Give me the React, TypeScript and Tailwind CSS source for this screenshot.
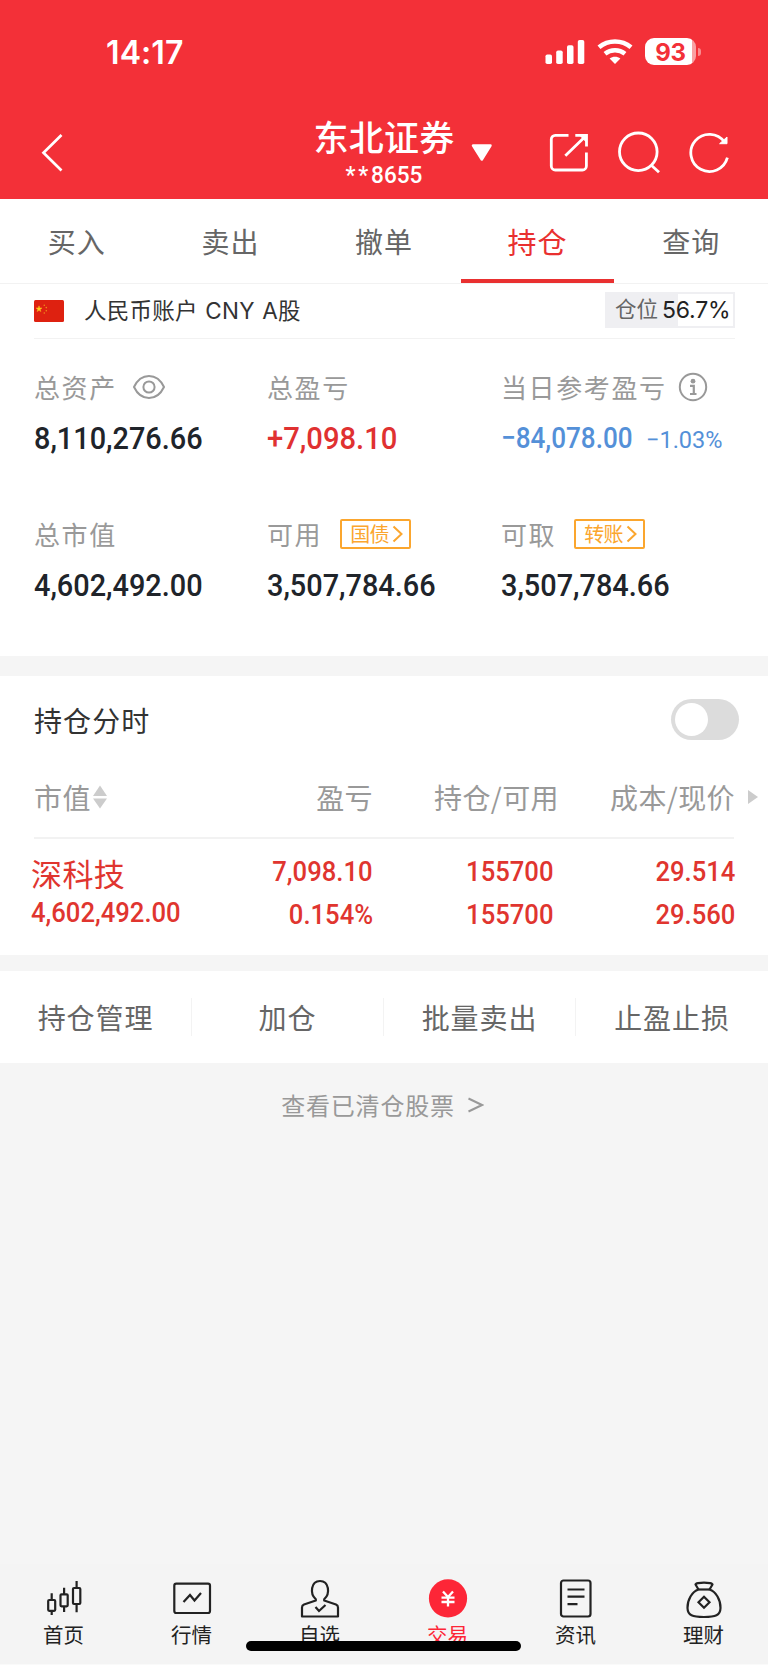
import React from "react";

const tabs = ["买入", "卖出", "撤单", "持仓", "查询"];
const actions = ["持仓管理", "加仓", "批量卖出", "止盈止损"];

const Digits = ({
	children,
	className = "",
}: {
	children: React.ReactNode;
	className?: string;
}) => (
	<span
		className={`inline-block whitespace-nowrap font-['Roboto',sans-serif] ${className}`}
	>
		{children}
	</span>
);

const StatusBar = () => (
	<div className="flex h-[103px] items-center justify-between pl-[106px] pr-[67px]">
		<span className="pt-[3px] font-['Inter',sans-serif] text-[32px] font-semibold leading-none tracking-[0.1px]">
			14:17
		</span>
		<div className="flex items-center">
			<svg width="40" height="26" viewBox="0 0 40 26" fill="#fff">
				<rect x="0.5" y="15.5" width="6.5" height="9.5" rx="1.8" />
				<rect x="11.2" y="11.5" width="6.5" height="13.5" rx="1.8" />
				<rect x="22" y="6.3" width="6.5" height="18.7" rx="1.8" />
				<rect x="32.8" y="1" width="6.5" height="24" rx="1.8" />
			</svg>
			<svg
				className="ml-[12px]"
				width="36"
				height="26"
				viewBox="0 0 36 26"
				fill="none"
				stroke="#fff"
			>
				<path d="M2 8.3C11.2 0.6 24.8 0.6 34 8.3" strokeWidth="4.6" />
				<path d="M8 14.8C13.8 10 22.2 10 28 14.8" strokeWidth="4.4" />
				<path
					d="M12.6 19.6C15.8 17.1 20.2 17.1 23.4 19.6L18 25Z"
					fill="#fff"
					stroke="none"
				/>
			</svg>
			<div className="ml-[12px] flex items-center">
				<div className="flex h-[27px] w-[51px] items-center justify-center rounded-[9px] bg-[linear-gradient(90deg,#fff_47px,#f9a0a3_47px)] pt-[2px] font-['Inter',sans-serif] text-[24px] font-bold leading-none tracking-[-0.3px] text-[#f33038]">
					93
				</div>
				<div className="ml-[2px] h-[8px] w-[3px] rounded-r-full bg-[#f98b8f]" />
			</div>
		</div>
	</div>
);

const TitleBar = () => (
	<div className="flex h-[96px]">
		<svg className="ml-[40px] mt-[29px]" width="26" height="42" viewBox="0 0 26 42">
			<path d="M21.5 3L3.5 20.7L21.5 38.5" fill="none" stroke="#fff" strokeWidth="2.7" />
		</svg>
		<div className="ml-[247px] flex w-[142px] flex-col items-center">
			<div className="mt-[15px] whitespace-nowrap text-[35px] font-medium leading-[36px] tracking-[0.3px]">
				东北证券
			</div>
			<Digits className="mt-[7px] scale-x-[0.94] text-[24px] font-medium leading-[28px]">
				<span className="tracking-[3px]">**</span>8655
			</Digits>
		</div>
		<svg className="ml-[15px] mt-[40px]" width="24" height="20" viewBox="0 0 24 20">
			<path
				d="M3 2.5H20.5L11.8 16.5Z"
				fill="#fff"
				stroke="#fff"
				strokeWidth="2.5"
				strokeLinejoin="round"
			/>
		</svg>
		<div className="ml-[53px] mt-[27px] flex gap-[27px]">
			<svg width="44" height="46" viewBox="0 0 44 46" fill="none" stroke="#fff" strokeWidth="2.8">
				<path d="M21.5 5.3H8.3A4 4 0 0 0 4.3 9.3V36A4 4 0 0 0 8.3 40H35.4A4 4 0 0 0 39.4 36V22.5" />
				<path d="M28.3 5.3H39.5V16.5M39.3 5.5L18.3 25.8" />
				<path d="M33 5.5H39.3V12Z" fill="#fff" strokeWidth="1" />
			</svg>
			<svg width="44" height="46" viewBox="0 0 44 46" fill="none" stroke="#fff" strokeWidth="2.8">
				<circle cx="20.3" cy="21.8" r="18.8" />
				<path d="M33.3 35.2L41 42.3" />
			</svg>
			<svg width="44" height="46" viewBox="0 0 44 46" fill="none" stroke="#fff" strokeWidth="2.8">
				<path d="M35.5 12A18.6 18.6 0 1 0 38.4 27.7" />
				<path d="M30.6 13.7H38V7Z" fill="#fff" strokeWidth="1" />
			</svg>
		</div>
	</div>
);

const ChinaFlag = () => (
	<svg width="30" height="22" viewBox="0 0 30 22">
		<rect width="30" height="22" rx="1.5" fill="#de2110" />
		<path
			d="M5 5.8L5.8 8H8L6.2 9.4L6.9 11.6L5 10.3L3.1 11.6L3.8 9.4L2 8H4.2Z"
			fill="#fbd01c"
			stroke="#fbb01c"
			strokeWidth="0.5"
		/>
		<g fill="#ef8a1c">
			<circle cx="10.3" cy="5.2" r="0.8" />
			<circle cx="12.3" cy="7.6" r="0.8" />
			<circle cx="12.3" cy="10.7" r="0.8" />
			<circle cx="10.3" cy="13" r="0.8" />
		</g>
	</svg>
);

const TagButton = ({ text }: { text: string }) => (
	<button className="ml-[18px] flex h-[30px] w-[71px] items-center rounded-[2px] border-2 border-[#fba62e] pl-[8px] text-[20px] leading-none tracking-[-0.6px] text-[#fba62e]">
		{text}
		<svg className="ml-[3px]" width="11" height="18" viewBox="0 0 11 18" fill="none">
			<path d="M1.5 1.5L9.5 9L1.5 16.5" stroke="#fba62e" strokeWidth="2" />
		</svg>
	</button>
);

const Stat = ({
	label,
	extra,
	children,
}: {
	label: string;
	extra?: React.ReactNode;
	children: React.ReactNode;
}) => (
	<div className="h-[147px]">
		<div className="flex h-[32px] items-center whitespace-nowrap text-[26px] leading-none tracking-[1.6px] text-[#999]">
			{label}
			{extra}
		</div>
		<div className="mt-[19px] flex h-[32px] items-center whitespace-nowrap text-[32px] leading-none text-[#20242a]">
			{children}
		</div>
	</div>
);

const statDigits = "origin-left scale-x-[0.902] font-medium";

const Summary = () => (
	<div className="grid h-[317px] grid-cols-[233px_234px_1fr] pl-[34px] pt-[32px]">
		<Stat
			label="总资产"
			extra={
				<svg
					className="ml-[15px]"
					width="34"
					height="26"
					viewBox="0 0 34 26"
					fill="none"
					stroke="#999"
					strokeWidth="2"
				>
					<path d="M2 13C9 -1.7 25 -1.7 32 13C25 27.7 9 27.7 2 13Z" />
					<circle cx="17" cy="13" r="5.6" />
				</svg>
			}
		>
			<Digits className={statDigits}>8,110,276.66</Digits>
		</Stat>
		<Stat label="总盈亏">
			<Digits className="origin-left scale-x-[0.912] font-medium text-[#e03131]">
				+7,098.10
			</Digits>
		</Stat>
		<Stat
			label="当日参考盈亏"
			extra={
				<svg className="ml-[11px]" width="30" height="30" viewBox="0 0 30 30" fill="none" stroke="#999">
					<circle cx="15" cy="15" r="13.2" strokeWidth="2" />
					<circle cx="15" cy="9.2" r="2.4" fill="#999" stroke="none" />
					<path d="M12 13.8H15.8V22M12 22H18.5" strokeWidth="2.2" />
				</svg>
			}
		>
			<div className="flex w-[224px] items-baseline text-[#5490d8]">
				<Digits className="w-[145px] origin-left scale-x-[0.87] text-[30px] font-medium">
					−84,078.00
				</Digits>
				<Digits className="origin-left scale-x-[0.98] text-[24px] font-normal">
					−1.03%
				</Digits>
			</div>
		</Stat>
		<Stat label="总市值">
			<Digits className={statDigits}>4,602,492.00</Digits>
		</Stat>
		<Stat label="可用" extra={<TagButton text="国债" />}>
			<Digits className={statDigits}>3,507,784.66</Digits>
		</Stat>
		<Stat label="可取" extra={<TagButton text="转账" />}>
			<Digits className={statDigits}>3,507,784.66</Digits>
		</Stat>
	</div>
);

const Pair = ({ top, bottom, className }: { top: string; bottom: string; className: string }) => (
	<div className={`flex flex-col items-end ${className}`}>
		<Digits className="origin-right scale-x-[0.915] font-medium leading-[43px]">{top}</Digits>
		<Digits className="origin-right scale-x-[0.915] font-medium leading-[43px]">
			{bottom}
		</Digits>
	</div>
);

const Holdings = () => (
	<>
		<div className="flex h-[88px] items-center justify-between bg-white pl-[34px] pr-[29px]">
			<span className="text-[28px] leading-none tracking-[1.1px] text-[#333]">持仓分时</span>
			<div className="mb-[2px] flex h-[41px] w-[68px] items-center rounded-full bg-[#dcdcdc] pl-[4px]">
				<div className="h-[33px] w-[33px] rounded-full bg-white" />
			</div>
		</div>
		<div className="bg-white">
			<div className="flex h-[73px] items-center pb-[7px] text-[28px] leading-none tracking-[0.4px] text-[#999]">
				<div className="flex w-[180px] items-center pl-[34px]">
					市值
					<svg className="ml-[1px]" width="16" height="26" viewBox="0 0 16 26" fill="#ccc">
						<path d="M8 1.5L15 12H1Z" />
						<path d="M8 24.5L15 14.5H1Z" />
					</svg>
				</div>
				<div className="w-[193px] text-right">盈亏</div>
				<div className="w-[186px] text-right">持仓/可用</div>
				<div className="w-[176px] text-right">成本/现价</div>
				<svg className="ml-[12px]" width="12" height="16" viewBox="0 0 12 16" fill="#ccc">
					<path d="M1 1L11 8L1 15Z" />
				</svg>
			</div>
			<div className="mx-[34px] h-[2px] bg-[#f2f2f2]" />
			<div className="flex h-[116px] pt-[11px] text-[28px] text-[#e0352f]">
				<div className="flex w-[180px] flex-col items-start pl-[31px]">
					<div className="whitespace-nowrap text-[31px] leading-[46px] tracking-[0.4px]">
						深科技
					</div>
					<Digits className="origin-left scale-x-[0.915] font-medium leading-[34px]">
						4,602,492.00
					</Digits>
				</div>
				<Pair className="w-[193px]" top="7,098.10" bottom="0.154%" />
				<Pair className="w-[180px]" top="155700" bottom="155700" />
				<Pair className="w-[182px]" top="29.514" bottom="29.560" />
			</div>
		</div>
	</>
);

const navItems = [
	{
		label: "首页",
		icon: (
			<>
				<rect x="4.2" y="20" width="7" height="10.8" rx="1" />
				<path d="M7.7 13.3V20M7.7 30.8V35" />
				<rect x="16.5" y="14.3" width="7.2" height="12" rx="1" />
				<path d="M20.1 7.7V14.3M20.1 26.3V32" />
				<rect x="29" y="8" width="7.3" height="16" rx="1" />
				<path d="M32.6 1V8M32.6 24V32.3" />
			</>
		),
	},
	{
		label: "行情",
		icon: (
			<>
				<rect x="2.3" y="3.7" width="35.7" height="29.3" rx="2" />
				<path d="M11.5 22L18 15L22.5 20.5L29 13" />
			</>
		),
	},
	{
		label: "自选",
		icon: (
			<>
				<path
					d="M15.8 19.3C9.5 13.5 11 1 20 1S30.5 13.5 24.2 19.3V20.5L36 24.5C37.5 25.2 38 26 38 27.5V36.5H2V27.5C2 26 2.5 25.2 4 24.5L15.8 20.5Z"
					strokeLinejoin="round"
				/>
				<path d="M15.5 27L19 31L25.5 25" />
			</>
		),
	},
	{ label: "交易", icon: null },
	{
		label: "资讯",
		icon: (
			<>
				<rect x="5" y="0.5" width="29.5" height="36" rx="2.5" />
				<path d="M11.5 9.5H28.5M11.5 16.7H28.5M11.5 24.2H21.5" />
			</>
		),
	},
	{
		label: "理财",
		icon: (
			<>
				<path
					d="M14.5 9.5L11.5 4.5C11 2 29 2 28.5 4.5L25.5 9.5C32 11.5 36.7 20 36.5 28C36.3 35.5 31.5 37 20 37S3.7 35.5 3.5 28C3.3 20 8 11.5 14.5 9.5Z"
					strokeLinejoin="round"
				/>
				<path d="M14.5 9.5H25.5" />
				<path d="M20 16.8L25.5 22.3L20 27.8L14.5 22.3Z" />
			</>
		),
	},
];

const BottomNav = () => (
	<div className="relative h-[101px] border-b border-[#fafafa] bg-[#f4f4f4]">
		<div className="grid grid-cols-6 pt-[16px]">
			{navItems.map((item) => (
				<div key={item.label} className="flex flex-col items-center">
					{item.icon ? (
						<svg
							className="overflow-visible"
							width="40"
							height="40"
							viewBox="0 0 40 40"
							fill="none"
							stroke="#222"
							strokeWidth="2.2"
						>
							{item.icon}
						</svg>
					) : (
						<svg className="overflow-visible" width="40" height="40" viewBox="0 0 40 40">
							<circle cx="20" cy="18.4" r="19.1" fill="#fd2637" />
							<path
								d="M15 11.5L20 17L25 11.5M20 17V26.5M13.5 17.7H26.5M13.5 22H26.5"
								fill="none"
								stroke="#fff"
								strokeWidth="2.3"
							/>
						</svg>
					)}
					<span
						className={`mt-[2px] pr-[1px] text-[20.5px] leading-[24px] ${
							item.icon ? "text-[#222]" : "text-[#fd2637]"
						}`}
					>
						{item.label}
					</span>
				</div>
			))}
		</div>
		<div className="absolute left-[246px] top-[77px] h-[10px] w-[275px] rounded-full bg-black" />
	</div>
);

const App = () => {
	return (
		<div className="flex h-[1665px] w-[768px] flex-col overflow-hidden bg-[#f5f5f5] font-['Noto_Sans_CJK_SC',sans-serif]">
			<header className="h-[199px] bg-[#f33038] text-white">
				<StatusBar />
				<TitleBar />
			</header>
			<div className="bg-white">
				<div className="grid h-[85px] grid-cols-5 border-b border-[#f2f2f2] pt-px text-[28px] leading-none tracking-[1px] text-[#666]">
					{tabs.map((tab) => (
						<div
							key={tab}
							className={`flex items-center justify-center border-b-4 pt-[3px] ${
								tab === "持仓"
									? "border-[#e93030] text-[29px] text-[#e93030]"
									: "border-transparent"
							}`}
						>
							{tab}
						</div>
					))}
				</div>
				<div className="ml-[34px] mr-[33px] flex h-[55px] items-center border-b border-[#f2f2f2]">
					<ChinaFlag />
					<span className="ml-[20px] whitespace-nowrap pt-px font-['Inter','Noto_Sans_CJK_SC',sans-serif] text-[22.5px] leading-none tracking-[0.25px] text-[#333] [word-spacing:1px]">
						人民币账户 CNY A股
					</span>
					<div className="mb-[2px] ml-auto flex h-[36px] w-[130px] items-center whitespace-nowrap border-2 border-[#efeff2] bg-[linear-gradient(90deg,#efeff2_71px,#fff_71px)] pl-[8px] font-['Inter','Noto_Sans_CJK_SC',sans-serif] leading-none">
						<span className="text-[21.5px] text-[#666]">仓位</span>
						<span className="ml-[4px] text-[23px] tracking-[-0.2px] text-[#222]">56.7%</span>
					</div>
				</div>
				<Summary />
			</div>
			<div className="h-[20px] shrink-0" />
			<Holdings />
			<div className="h-[16px] shrink-0" />
			<div className="grid h-[92px] grid-cols-4 items-center bg-white text-[28px] leading-none tracking-[0.9px] text-[#666]">
				{actions.map((action) => (
					<div
						key={action}
						className="flex h-[38px] items-center justify-center border-r border-[#f3f3f3] last:border-r-0"
					>
						{action}
					</div>
				))}
			</div>
			<div className="flex h-[84px] items-center justify-center pr-[3px] text-[24px] leading-none tracking-[0.8px] text-[#999]">
				查看已清仓股票
				<svg className="ml-[12px]" width="17" height="16" viewBox="0 0 17 16">
					<path d="M1.5 1.5L15 8L1.5 14.5" fill="none" stroke="#999" strokeWidth="2" />
				</svg>
			</div>
			<div className="flex-1" />
			<BottomNav />
		</div>
	);
};

export default App;
